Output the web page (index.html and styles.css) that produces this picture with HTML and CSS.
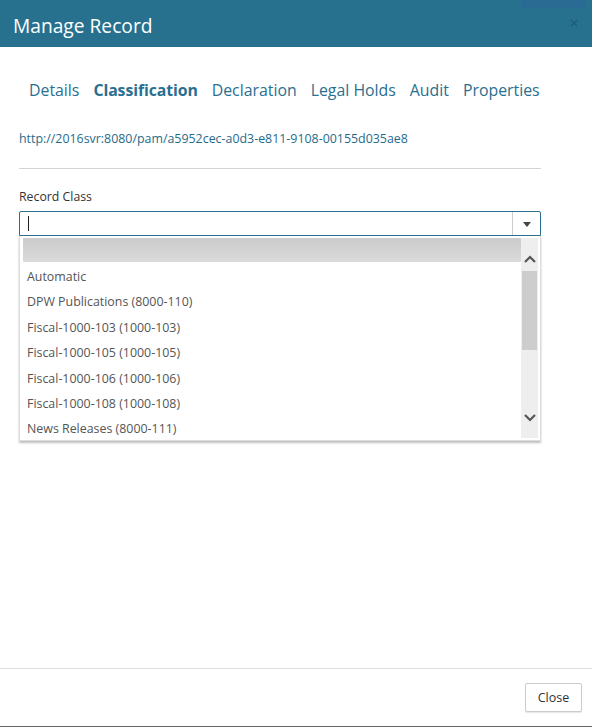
FILE: index.html
```html
<!DOCTYPE html>
<html>
  <head>
    <title>Manage Record</title>
    <link rel="stylesheet" href="styles.css">
  </head>
  <body>
    <div class="dialog">
      <div class="titlebar">
        <span class="title">Manage Record</span>
        <span class="tab-ghost"></span>
        <span class="close-x">&times;</span>
      </div>

      <div class="content">
        <ul class="tabs">
          <li>Details</li>
          <li class="active">Classification</li>
          <li>Declaration</li>
          <li>Legal Holds</li>
          <li>Audit</li>
          <li>Properties</li>
        </ul>

        <a class="uri">http://2016svr:8080/pam/a5952cec-a0d3-e811-9108-00155d035ae8</a>
        <hr class="sep">

        <label class="field-label">Record Class</label>
        <div class="combo">
          <div class="combo-input">
            <span class="caret"></span>
            <span class="combo-btn"><span class="arrow"></span></span>
          </div>
          <div class="combo-list">
            <ul class="options">
              <li class="selected">&nbsp;</li>
              <li>Automatic</li>
              <li>DPW Publications (8000-110)</li>
              <li>Fiscal-1000-103 (1000-103)</li>
              <li>Fiscal-1000-105 (1000-105)</li>
              <li>Fiscal-1000-106 (1000-106)</li>
              <li>Fiscal-1000-108 (1000-108)</li>
              <li>News Releases (8000-111)</li>
            </ul>
            <div class="scrollbar">
              <svg class="sb-arrow" width="14" height="10" viewBox="0 0 14 10"><path d="M2 8 L7 3 L12 8" fill="none" stroke="#555" stroke-width="2.2"/></svg>
              <div class="sb-track"><div class="sb-thumb"></div></div>
              <svg class="sb-arrow" width="14" height="10" viewBox="0 0 14 10"><path d="M2 2 L7 7 L12 2" fill="none" stroke="#555" stroke-width="2.2"/></svg>
            </div>
          </div>
        </div>
      </div>

      <div class="footer">
        <button class="btn">Close</button>
      </div>
    </div>
  </body>
</html>
```

FILE: styles.css
```css
body {
  margin: 0;
  background: #fff;
  font-family: "Open Sans", "Noto Sans", sans-serif;
  color: #333;
}

.dialog {
  height: 726px;
  border-bottom: 1px solid #666;
  display: flex;
  flex-direction: column;
}

.titlebar {
  position: relative;
  height: 47px;
  box-sizing: border-box;
  padding-top: 3px;
  background-color: #27718f;
  display: flex;
  align-items: center;
  padding-left: 13px;
}

.title {
  color: #fff;
  font-size: 19.2px;
}

/* bit of the page behind, peeking over the header */
.tab-ghost {
  position: absolute;
  top: 0;
  left: 521px;
  width: 64px;
  height: 8px;
  background: #2a6b94;
}

.close-x {
  position: absolute;
  right: 13px;
  top: 11px;
  font-size: 17px;
  color: #1d5a74;
}

.content {
  flex: 1;
  padding: 0 51px 0 19px;
}

.tabs {
  list-style: none;
  margin: 31px 0 0 0;
  padding: 0 0 0 10px;
  display: flex;
  gap: 14px;
  font-size: 15.85px;
  color: #2a6f8f;
  line-height: 24px;
  white-space: nowrap;
}

.tabs li {
  flex-shrink: 0;
}

.tabs .active {
  font-weight: bold;
  letter-spacing: -0.1px;
}

.uri {
  display: block;
  margin-top: 28px;
  font-size: 12.4px;
  line-height: 18px;
  color: #1f6b8c;
}

.sep {
  border: 0;
  border-top: 1px solid #d3d3d3;
  margin: 20px 0 0 0;
}

.field-label {
  display: block;
  margin-top: 19px;
  font-size: 12.3px;
  line-height: 18px;
  color: #333;
}

.combo {
  position: relative;
  margin-top: 5px;
}

.combo-input {
  height: 23px;
  border: 1px solid #2a6f8f;
  border-radius: 2px 2px 0 0;
  display: flex;
  align-items: center;
  justify-content: space-between;
}

.caret {
  width: 1px;
  height: 15px;
  background: #222;
  margin-left: 8px;
}

.combo-btn {
  width: 27px;
  height: 23px;
  border-left: 1px solid #ccc;
  display: flex;
  align-items: center;
  justify-content: center;
}

.arrow {
  width: 0;
  height: 0;
  border-left: 4px solid transparent;
  border-right: 4px solid transparent;
  border-top: 5px solid #444;
  margin-top: 2px;
}

.combo-list {
  position: absolute;
  left: 0;
  right: 0;
  top: 25px;
  height: 205px;
  background: #fff;
  border: 1px solid #ddd;
  border-top: 0;
  box-shadow: 0 2px 2px rgba(0, 0, 0, 0.25);
  display: flex;
  padding: 2px;
  box-sizing: border-box;
}

.options {
  list-style: none;
  margin: 0;
  padding: 0;
  flex: 1;
  font-size: 12.4px;
  color: #555;
}

.options li {
  height: 25.4px;
  line-height: 25.4px;
  padding-left: 5px;
}

.options .selected {
  height: 24px;
  margin-left: 1px;
  background: linear-gradient(#ccc, #dadada);
  border-radius: 1px;
  margin-bottom: 2px;
}

.scrollbar {
  width: 17px;
  background: #eee;
  display: flex;
  flex-direction: column;
  align-items: center;
}

.sb-arrow {
  margin: 16px 0 7px 0;
}

.sb-arrow:last-child {
  margin: 6px 0 15px 0;
}

.sb-track {
  flex: 1;
  width: 100%;
}

.sb-thumb {
  height: 79px;
  width: 15px;
  margin: 0 auto;
  background: #cdcdcd;
}

.footer {
  height: 57px;
  border-top: 1px solid #ddd;
  display: flex;
  justify-content: flex-end;
  align-items: center;
  padding-right: 10px;
}

.btn {
  font-family: "Open Sans", "Noto Sans", sans-serif;
  font-size: 12.5px;
  color: #333;
  background: #fff;
  border: 1px solid #ccc;
  border-radius: 2px;
  height: 29px;
  width: 57px;
  box-shadow: 0 1px 1px rgba(0, 0, 0, 0.1);
}
```
